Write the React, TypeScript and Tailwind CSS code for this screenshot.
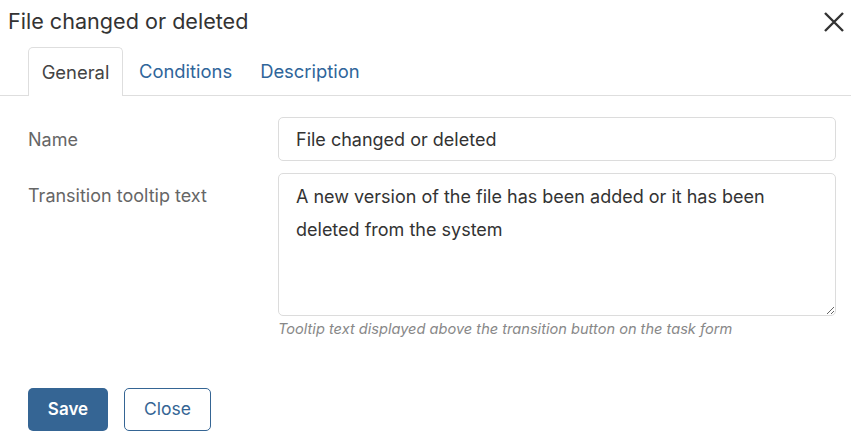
import { type JSX } from 'react';

function CloseIcon(): JSX.Element {
  return (
    <svg width="22" height="22" viewBox="0 0 22 22" fill="none">
      <path d="M2 2L20 20M20 2L2 20" stroke="#333" strokeWidth="2.4" />
    </svg>
  );
}

function App(): JSX.Element {
  return (
    <div className="w-[851px] h-[439px] bg-white text-[#333] font-['Inter',sans-serif] overflow-hidden">
      {/* header */}
      <div className="flex items-start justify-between pl-[8px] pr-[6px] pt-[7px] h-[47px]">
        <h3 className="text-[21.6px] leading-[28px] text-[#333]">File changed or deleted</h3>
        <button className="mt-[4px]">
          <CloseIcon />
        </button>
      </div>

      {/* tabs */}
      <div className="flex border-b border-[#dedede] pl-[28px] h-[49px]">
        <div className="w-[95px] pt-[2px] flex items-center justify-center border border-b-0 border-[#dedede] rounded-t-[5px] bg-white mb-[-1px] text-[18.4px] text-[#444]">
          General
        </div>
        <div className="pl-[16px] pr-[14px] pt-[2px] flex items-center text-[18.4px] text-[#2f659a]">Conditions</div>
        <div className="px-[14px] pt-[2px] flex items-center text-[18.4px] text-[#2f659a]">Description</div>
      </div>

      {/* form */}
      <div className="pl-[28px] pr-[15px] pt-[21px]">
        <div className="flex items-center h-[44px]">
          <label className="w-[250px] text-[18px] text-[#666]">Name</label>
          <input
            className="flex-1 h-[44px] rounded-[5px] border border-[#dcdcdc] px-[17px] text-[18px] text-[#333] outline-none"
            defaultValue="File changed or deleted"
          />
        </div>
        <div className="flex items-start mt-[12px]">
          <label className="w-[250px] text-[18px] text-[#666] pt-[6px] leading-[33px]">Transition tooltip text</label>
          <div className="flex-1 flex flex-col">
            <textarea
              className="h-[143px] rounded-[5px] border border-[#dcdcdc] px-[17px] pt-[6px] text-[18px] leading-[33px] text-[#333] outline-none"
              defaultValue="A new version of the file has been added or it has been deleted from the system"
            />
            <span className="mt-[3px] text-[14.6px] italic text-[#888]">
              Tooltip text displayed above the transition button on the task form
            </span>
          </div>
        </div>

        {/* footer buttons */}
        <div className="flex gap-[16px] mt-[47px]">
          <button className="w-[80px] h-[43px] rounded-[5px] bg-[#356594] text-white text-[17px] font-semibold">
            Save
          </button>
          <button className="w-[87px] h-[43px] rounded-[5px] border border-[#356594] text-[#356594] text-[17.5px]">
            Close
          </button>
        </div>
      </div>
    </div>
  );
}

export default App;
